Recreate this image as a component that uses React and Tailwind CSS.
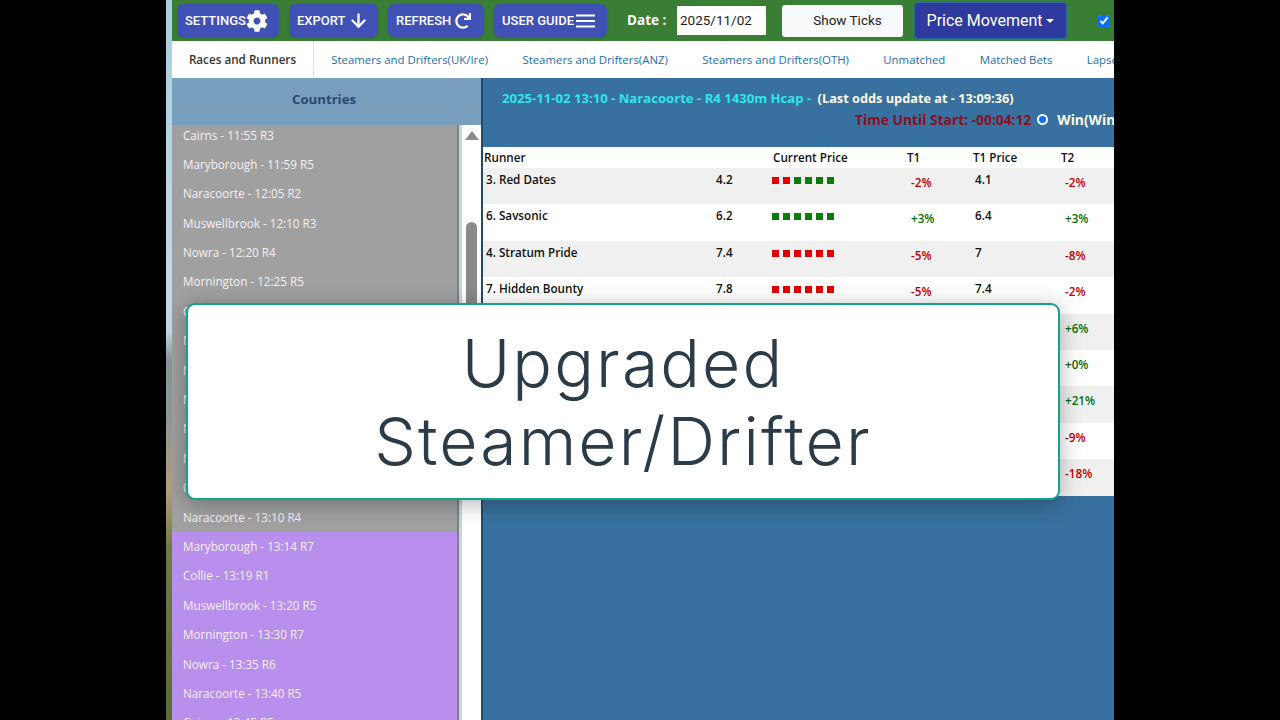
import React from 'react';
import { FaCog, FaRedo } from 'react-icons/fa';
import { ArrowDown } from 'lucide-react';

const NAV_BUTTONS = [
  { label: 'SETTINGS', width: 'w-[102px]', icon: <FaCog className="text-[22px]" /> },
  { label: 'EXPORT', width: 'w-[89px]', icon: <ArrowDown size={21} strokeWidth={2.6} className="ml-[3px]" /> },
  { label: 'REFRESH', width: 'w-[96px]', icon: <FaRedo className="text-[16px] ml-[4px]" /> },
  { label: 'USER GUIDE', width: 'w-[113px]', icon: <MenuBars /> },
];

const TABS = [
  'Steamers and Drifters(UK/Ire)',
  'Steamers and Drifters(ANZ)',
  'Steamers and Drifters(OTH)',
  'Unmatched',
  'Matched Bets',
  'Lapsed',
];

const GREY_RACES = [
  'Cairns - 11:55 R3',
  'Maryborough - 11:59 R5',
  'Naracoorte - 12:05 R2',
  'Muswellbrook - 12:10 R3',
  'Nowra - 12:20 R4',
  'Mornington - 12:25 R5',
  'Collie - 12:29 R8',
  'Maryborough - 12:34 R6',
  'Naracoorte - 12:40 R3',
  'Muswellbrook - 12:45 R4',
  'Nowra - 12:55 R5',
  'Mornington - 13:00 R6',
  'Cairns - 13:05 R4',
  'Naracoorte - 13:10 R4',
];

const PURPLE_RACES = [
  'Maryborough - 13:14 R7',
  'Collie - 13:19 R1',
  'Muswellbrook - 13:20 R5',
  'Mornington - 13:30 R7',
  'Nowra - 13:35 R6',
  'Naracoorte - 13:40 R5',
  'Cairns - 13:45 R5',
];

// r = red tick, g = green tick
const RUNNERS = [
  { name: '3. Red Dates', price: '4.2', ticks: 'rrgggg', t1: '-2%', t1Price: '4.1', t2: '-2%' },
  { name: '6. Savsonic', price: '6.2', ticks: 'gggggg', t1: '+3%', t1Price: '6.4', t2: '+3%' },
  { name: '4. Stratum Pride', price: '7.4', ticks: 'rrrrrr', t1: '-5%', t1Price: '7', t2: '-8%' },
  { name: '7. Hidden Bounty', price: '7.8', ticks: 'rrrrrr', t1: '-5%', t1Price: '7.4', t2: '-2%' },
  { t2: '+6%' },
  { t2: '+0%' },
  { t2: '+21%' },
  { t2: '-9%' },
  { t2: '-18%' },
];

function MenuBars() {
  return (
    <svg width="20" height="14" viewBox="0 0 20 14" className="ml-[2px]" fill="white">
      <rect x="0" y="0.5" width="19" height="2" />
      <rect x="0" y="6" width="19" height="2" />
      <rect x="0" y="11.5" width="19" height="2" />
    </svg>
  );
}

function Percent({ value }) {
  const color = value.startsWith('-') ? 'text-[#c40000]' : 'text-[#0b6b0b]';
  return <span className={`${color} font-semibold`}>{value}</span>;
}

const RaceRow = ({ text }) => (
  <div className="h-[29.4px] flex items-center pl-[11px] text-[11.7px] text-[#f4f0f6] whitespace-nowrap">{text}</div>
);

export default function App() {
  return (
    <div className="w-[1280px] h-screen bg-black flex overflow-hidden relative font-['Open_Sans',sans-serif]">
      <div className="w-[166px] shrink-0" />
      {/* bit of desktop wallpaper showing behind the window */}
      <div className="w-[6px] shrink-0 bg-[linear-gradient(to_bottom,#a9cfdf_0%,#c5dbe4_46%,#8a979c_50%,#8f9a98_58%,#b79f7d_68%,#6f7a45_76%,#5c6b35_100%)]" />

      <div className="w-[942px] shrink-0 flex flex-col overflow-hidden">
        {/* Navigation */}
        <div className="h-[41px] shrink-0 bg-[#3a7d34] flex items-center pl-[5px] whitespace-nowrap">
          <div className="flex gap-[10px] font-['Roboto',sans-serif] font-medium text-[13px] text-white">
            {NAV_BUTTONS.map((b) => (
              <button key={b.label} className={`${b.width} h-[33px] bg-[#3f51b5] rounded-md shadow-sm flex items-center pl-[8px]`}>
                {b.label}
                {b.icon}
              </button>
            ))}
          </div>
          <span className="ml-[20px] w-[50px] text-[13.5px] font-bold text-white">Date :</span>
          <div className="h-[29px] w-[89px] bg-white flex items-center pl-[3px] text-[13.5px] text-[#222] font-['Roboto',sans-serif]">2025/11/02</div>
          <button className="ml-[16px] w-[121px] h-[32px] bg-[#f8f9fa] rounded-[3px] text-[13.5px] text-[#222] font-['Roboto',sans-serif] pl-[10px]">Show Ticks</button>
          <button className="ml-[11px] w-[153px] h-[37px] bg-[#2f3a9e] border border-[#2a6a9e] rounded-[4px] text-[16px] text-white font-['Roboto',sans-serif] flex items-center justify-center gap-[4px]">
            Price Movement
            <span className="w-0 h-0 border-x-[4px] border-x-transparent border-t-[4px] border-t-white" />
          </button>
          <input type="checkbox" defaultChecked className="ml-[31px] w-[12px] h-[12px] accent-[#0d6efd] shrink-0" />
        </div>

        {/* Tabs */}
        <div className="h-[37px] shrink-0 bg-white flex items-center text-[11.4px] whitespace-nowrap">
          <div className="w-[142px] h-full shrink-0 border-r border-[#dee2e6] flex items-center justify-center text-[11.7px] font-semibold text-[#333]">Races and Runners</div>
          {TABS.map((t) => (
            <div key={t} className="px-[17.2px] text-[#1a6fae] shrink-0">{t}</div>
          ))}
        </div>

        <div className="flex-1 flex min-h-0">
          {/* Races */}
          <div className="w-[309px] shrink-0 flex flex-col">
            <div className="h-[47px] shrink-0 bg-[#789fbd] flex items-center justify-center pr-[5px] pb-[4px] text-[13.2px] font-bold text-[#2b4a72]">Countries</div>
            <div className="flex-1 flex min-h-0">
              <div className="flex-1 overflow-hidden">
                <div className="-mt-[4.4px]">
                  <div className="bg-[#a0a0a0]">
                    {GREY_RACES.map((r) => <RaceRow key={r} text={r} />)}
                  </div>
                  <div className="bg-[#b88fec]">
                    {PURPLE_RACES.map((r) => <RaceRow key={r} text={r} />)}
                  </div>
                </div>
              </div>
              <div className="w-[2px] bg-[#808080]" />
              <div className="w-[3px] bg-[#c3d6e4]" />
              <div className="w-[19px] bg-white flex flex-col items-center">
                <div className="mt-[6px] w-0 h-0 border-x-[7px] border-x-transparent border-b-[9px] border-b-[#8a8a8a]" />
                <div className="mt-[82px] w-[11px] h-[180px] bg-[#8a8a8a] rounded-t-full" />
              </div>
            </div>
          </div>

          {/* Race detail */}
          <div className="flex-1 bg-[#38719f] border-l-2 border-[#1f4b73] min-w-0 overflow-hidden">
            <div className="pl-[19px] pt-[11px] h-[31px] text-[13.13px] font-bold whitespace-nowrap text-[#2ee6ea]">
              2025-11-02 13:10 - Naracoorte - R4 1430m Hcap - <span className="text-[12.75px] text-[#fdfbe8] ml-[3px]">(Last odds update at - 13:09:36)</span>
            </div>
            <div className="h-[38px] pl-[372px] flex items-start whitespace-nowrap text-[13.8px] font-bold pt-[1px]">
              <span className="text-[#8c0d22]">Time Until Start: -00:04:12</span>
              <span className="ml-[6px] mt-[4px] w-[11px] h-[11px] rounded-full bg-[#0d6efd] border-[2px] border-white shrink-0" />
              <span className="ml-[9px] text-[#fdfbe8]">Win(Win</span>
            </div>

            <div className="w-[680px] bg-white text-[11.7px] text-[#111] font-semibold whitespace-nowrap">
              <div className="h-[21px] grid grid-cols-[289px_134px_66px_88px_1fr] items-center pl-[1px]">
                <span>Runner</span>
                <span>Current Price</span>
                <span>T1</span>
                <span>T1 Price</span>
                <span>T2</span>
              </div>
              {RUNNERS.map((r, i) => (
                <div
                  key={i}
                  className={`h-[36.4px] grid grid-cols-[230px_56px_135px_68px_86px_1fr] pl-[3px] pt-[3px] ${i % 2 === 0 ? 'bg-[#f0f0f0]' : 'bg-white'}`}
                >
                  <span>{r.name}</span>
                  <span>{r.price}</span>
                  <span className="flex gap-[4px] pt-[6px]">
                    {r.ticks && r.ticks.split('').map((c, j) => (
                      <span key={j} className={`w-[7px] h-[7px] ${c === 'r' ? 'bg-[#e00000]' : 'bg-[#0a7a0a]'}`} />
                    ))}
                  </span>
                  <span className="pl-[4px] pt-[3px]">{r.t1 && <Percent value={r.t1} />}</span>
                  <span>{r.t1Price}</span>
                  <span className="pl-[4px] pt-[3px]"><Percent value={r.t2} /></span>
                </div>
              ))}
            </div>
          </div>
        </div>
      </div>

      <div className="flex-1" />

      {/* Title card over the page */}
      <div className="absolute left-[186px] top-[303px] w-[874px] h-[197px] bg-white border-2 border-[#17a08a] rounded-[9px] shadow-[0_4px_22px_rgba(0,0,0,0.3)] flex items-center justify-center text-center">
        <div className="font-['Inter',sans-serif] font-light text-[66px] leading-[78px] tracking-[2.1px] text-[#2c3b48]">
          Upgraded<br />Steamer/Drifter
        </div>
      </div>
    </div>
  );
}
